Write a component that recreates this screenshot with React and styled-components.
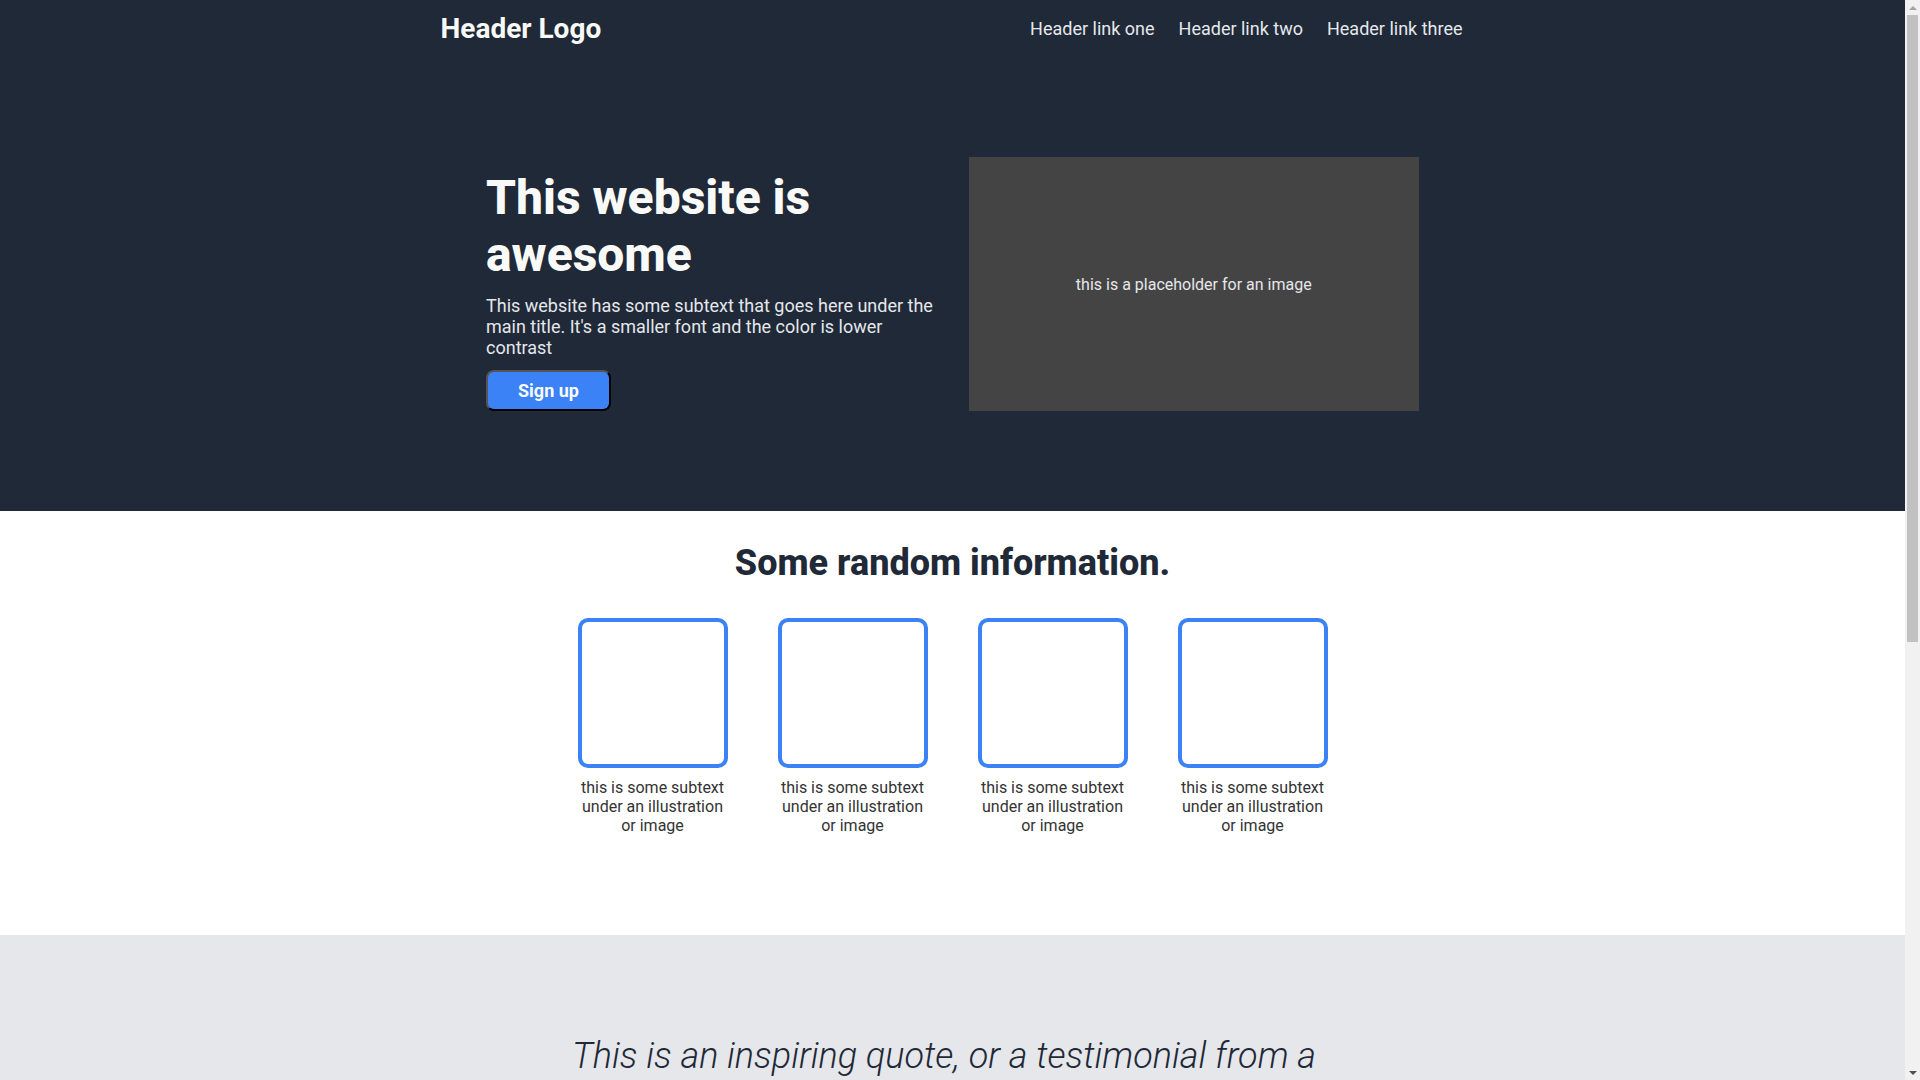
import styled, { createGlobalStyle } from 'styled-components';

// page defaults
const GlobalStyle = createGlobalStyle`
  body {
    margin: 0;
    padding-right: 15px;
    font-family: Roboto, "Liberation Sans", sans-serif;
    color: #1f2937;
  }
`;

// window scrollbar, as the reference shows it
const ScrollBar = styled.div`
  position: fixed;
  top: 0;
  right: 0;
  width: 15px;
  height: 100vh;
  background-color: #f1f1f1;
  display: flex;
  flex-direction: column;
  align-items: center;
`;

const Arrow = styled.div`
  height: 15px;
  width: 15px;
  display: flex;
  align-items: center;
  justify-content: center;

  &::before {
    content: '';
    border-left: 4px solid transparent;
    border-right: 4px solid transparent;
    ${p => p.$down
      ? 'border-top: 4px solid #505050;'
      : 'border-bottom: 4px solid #a3a3a3;'}
  }
`;

const Thumb = styled.div`
  width: 11px;
  height: 627px;
  background-color: #c1c1c1;
`;

const Spacer = styled.div`
  flex: 1;
`;

// styles
const Hero = styled.div`
  background-color: #1f2937;
  padding-bottom: 100px;
`;

const Header = styled.header`
  width: 1024px;
  height: 57px;
  margin: 0 auto;
  display: flex;
  justify-content: space-between;
  align-items: center;
`;

const Logo = styled.div`
  font-size: 28px;
  font-weight: 700;
  color: #f9faf8;
`;

const Links = styled.nav`
  display: flex;
  gap: 24px;
  padding-right: 2px;
`;

const Link = styled.a`
  font-size: 18px;
  color: #e5e7eb;
  text-decoration: none;
`;

const HeroBody = styled.div`
  width: 933px;
  margin: 100px auto 0;
  display: flex;
  align-items: flex-start;
  gap: 32px;
`;

const HeroText = styled.div`
  flex: 1;
  display: flex;
  flex-direction: column;
  align-items: flex-start;
  padding-top: 12px;
`;

const Title = styled.h1`
  margin: 0;
  font-size: 48px;
  font-weight: 800;
  line-height: 57px;
  color: #f9faf8;
`;

const Subtext = styled.p`
  margin: 12px 0 12px;
  font-size: 18px;
  color: #e5e7eb;
`;

const Button = styled.button`
  background-color: #3b82f6;
  color: #f9faf8;
  font-family: inherit;
  font-size: 18px;
  font-weight: 700;
  padding: 8px 30px;
  border-radius: 8px;
  border: 2px outset #555;
`;

const Placeholder = styled.div`
  flex: 1;
  height: 254px;
  background-color: #444;
  color: #e5e7eb;
  font-size: 16px;
  display: flex;
  align-items: center;
  justify-content: center;
`;

const Info = styled.section`
  padding: 31px 0 100px;
  display: flex;
  flex-direction: column;
  align-items: center;
`;

const SectionTitle = styled.h2`
  margin: 0 0 34px;
  font-size: 36px;
  font-weight: 800;
  color: #1f2937;
`;

const Cards = styled.div`
  display: flex;
  gap: 50px;
`;

const Card = styled.div`
  width: 150px;
  display: flex;
  flex-direction: column;
  gap: 10px;
`;

const Frame = styled.div`
  height: 150px;
  border: 4px solid #3b82f6;
  border-radius: 10px;
  box-sizing: border-box;
`;

const Caption = styled.p`
  margin: 0;
  text-align: center;
  font-size: 16px;
  color: #333;
`;

const QuoteBand = styled.section`
  background-color: #e5e7eb;
  padding: 100px 0;
`;

const Quote = styled.blockquote`
  width: 860px;
  margin: 0 auto;
  padding-right: 17px;
  font-size: 36px;
  font-weight: 300;
  font-style: italic;
  text-align: center;
  color: #1f2937;
  line-height: 1.2;
`;

const Author = styled.p`
  width: 860px;
  margin: 16px auto 0;
  text-align: right;
  font-size: 24px;
  font-weight: 700;
`;

const Cta = styled.section`
  padding: 100px 0;
  display: flex;
  justify-content: center;
`;

const CtaBox = styled.div`
  width: 900px;
  background-color: #3b82f6;
  border-radius: 10px;
  padding: 48px 80px;
  box-sizing: border-box;
  display: flex;
  justify-content: space-between;
  align-items: center;
  color: #f9faf8;
`;

const CtaTitle = styled.h3`
  margin: 0 0 6px;
  font-size: 24px;
`;

const CtaButton = styled.button`
  background: transparent;
  color: #f9faf8;
  font-family: inherit;
  font-size: 18px;
  font-weight: 700;
  padding: 8px 28px;
  border: 2px solid #f9faf8;
  border-radius: 8px;
`;

const Footer = styled.footer`
  background-color: #1f2937;
  color: #e5e7eb;
  text-align: center;
  padding: 50px 0;
`;

const cards = [1, 2, 3, 4];

function App() {
  return (
    <>
      <GlobalStyle />
      <Hero>
        <Header>
          <Logo>Header Logo</Logo>
          <Links>
            <Link href="#">Header link one</Link>
            <Link href="#">Header link two</Link>
            <Link href="#">Header link three</Link>
          </Links>
        </Header>
        <HeroBody>
          <HeroText>
            <Title>This website is awesome</Title>
            <Subtext>
              This website has some subtext that goes here under the main title. It's a smaller font and the color is lower contrast
            </Subtext>
            <Button>Sign up</Button>
          </HeroText>
          <Placeholder>this is a placeholder for an image</Placeholder>
        </HeroBody>
      </Hero>

      <Info>
        <SectionTitle>Some random information.</SectionTitle>
        <Cards>
          {cards.map(n => (
            <Card key={n}>
              <Frame />
              <Caption>this is some subtext under an illustration or image</Caption>
            </Card>
          ))}
        </Cards>
      </Info>

      <QuoteBand>
        <Quote>
          This is an inspiring quote, or a testimonial from a customer. Maybe it's just filling up space, or maybe people will actually read it. Who knows? All I know is that it looks nice.
        </Quote>
        <Author>-Thor, God of Thunder</Author>
      </QuoteBand>

      <Cta>
        <CtaBox>
          <div>
            <CtaTitle>Call to action! It's time!</CtaTitle>
            <div>Sign up for our product by clicking that button right over there!</div>
          </div>
          <CtaButton>Sign up</CtaButton>
        </CtaBox>
      </Cta>

      <Footer>Copyright © The Odin Project 2021</Footer>

      <ScrollBar>
        <Arrow />
        <Thumb />
        <Spacer />
        <Arrow $down />
      </ScrollBar>
    </>
  );
}

export default App;
